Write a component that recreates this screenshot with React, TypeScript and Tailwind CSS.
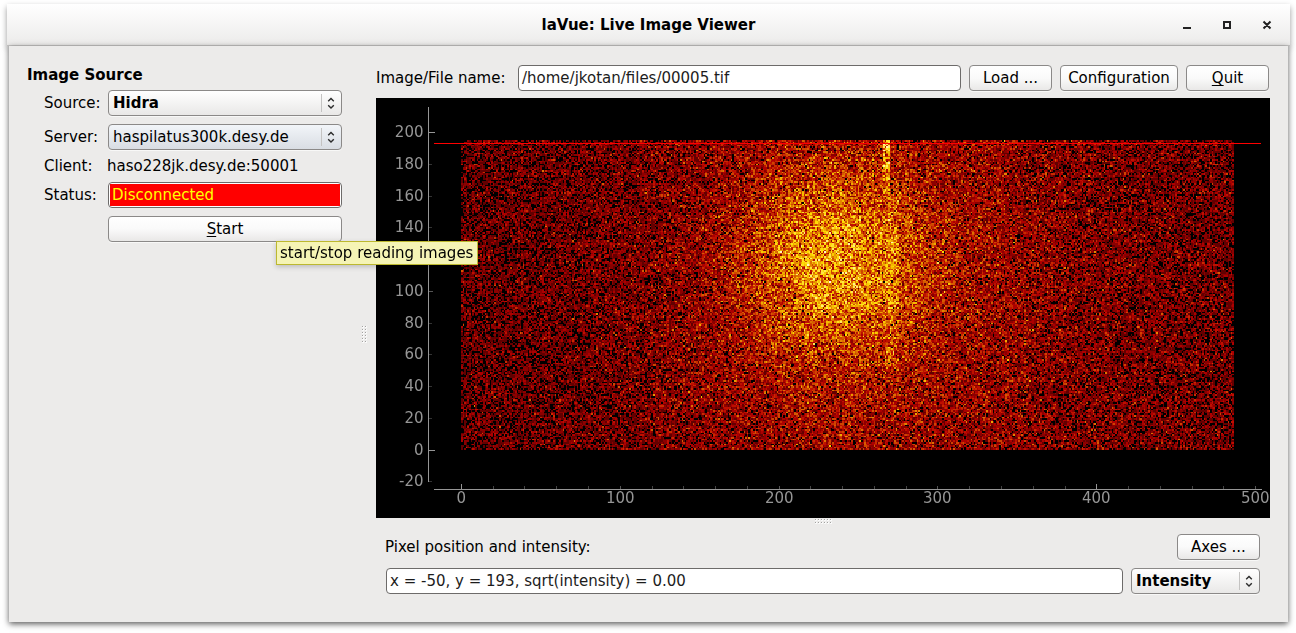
import { useLayoutEffect, useRef } from 'react';
import type { ReactNode } from 'react';

const COLS = 487;
const ROWS = 195;

function random(seed: number) {
  let s = seed;
  return () => {
    s = (s + 0x6d2b79f5) | 0;
    let t = Math.imul(s ^ (s >>> 15), 1 | s);
    t = (t + Math.imul(t ^ (t >>> 7), 61 | t)) ^ t;
    return ((t ^ (t >>> 14)) >>> 0) / 4294967296;
  };
}

function poisson(mean: number, rnd: () => number) {
  const limit = Math.exp(-mean);
  let n = 0;
  let p = rnd();
  while (p > limit) {
    n += 1;
    p *= rnd();
  }
  return n;
}

function heat(v: number): [number, number, number] {
  if (v < 1 / 3) return [185 * v * 3, 0, 0];
  if (v < 2 / 3) {
    const t = (v - 1 / 3) * 3;
    return [185 + 70 * t, 220 * t, 0];
  }
  const t = Math.min(1, (v - 2 / 3) * 3);
  return [255, 220 + 35 * t, 255 * t];
}

function expectedCount(x: number, y: number) {
  const dx = (x - 232) / (x < 232 ? 32 : 38);
  const dy = (y - 77) / 35;
  const core = 7 * Math.exp(-0.5 * (dx * dx + dy * dy));
  const hx = (x - 245) / 80;
  const hy = (y - 85) / 120;
  const halo = 2.4 * Math.exp(-0.5 * (hx * hx + hy * hy));
  let streak = 0;
  if (Math.abs(x - 267.5) < 1.6 && y < 34) streak = 9 - y * 0.2;
  else if (Math.abs(x - 271) < 5 && y > 34 && y < 142) streak = 1.6;
  const base = x > 320 ? 1.5 : 1.2;
  return base + core + halo + streak;
}

function DetectorImage() {
  const ref = useRef<HTMLCanvasElement>(null);
  useLayoutEffect(() => {
    const ctx = ref.current?.getContext('2d');
    if (!ctx) return;
    const rnd = random(50001);
    const image = ctx.createImageData(COLS, ROWS);
    for (let y = 0; y < ROWS; y++) {
      for (let x = 0; x < COLS; x++) {
        const gain = 0.3 + 1.4 * rnd();
        const n = poisson(expectedCount(x, y) * gain, rnd);
        const [r, g, b] = heat(Math.sqrt(n) / 5.6);
        const i = (y * COLS + x) * 4;
        image.data[i] = r;
        image.data[i + 1] = g;
        image.data[i + 2] = b;
        image.data[i + 3] = 255;
      }
    }
    ctx.putImageData(image, 0, 0);
  }, []);
  return (
    <canvas
      ref={ref}
      width={COLS}
      height={ROWS}
      className="absolute left-[85px] top-[42px] h-[310px] w-[773px] [image-rendering:pixelated]"
    />
  );
}

const yTicks = [200, 180, 160, 140, 120, 100, 80, 60, 40, 20, 0, -20];
const xTicks = Array.from({ length: 26 }, (_, i) => i * 20);

function Plot() {
  return (
    <div className="relative h-[420px] w-[894px] shrink-0 overflow-hidden bg-black">
      <DetectorImage />
      <svg
        className="absolute inset-0"
        width="894"
        height="420"
        fill="#969696"
        fontFamily="'DejaVu Sans', sans-serif"
        fontSize="15"
        shapeRendering="crispEdges"
      >
        <rect x="58" y="45" width="827" height="1" fill="#ff0000" />
        <rect x="52" y="9" width="1" height="375" />
        <rect x="58" y="391" width="828" height="1" />
        {yTicks.map((v) => {
          const y = Math.round(351.7 - v * 1.5885);
          const major = v % 200 === 0;
          const mid = v === 100;
          return (
            <g key={v}>
              <rect x="53" y={y} width={major ? 6 : mid ? 4 : 3} height="1" fill={major ? '#969696' : mid ? '#555' : '#333'} />
              <text x="47.5" y={y + 5} textAnchor="end">{v}</text>
            </g>
          );
        })}
        {xTicks.map((v) => {
          const x = Math.floor(85.4 + v * 1.5885);
          const major = v % 400 === 0;
          const mid = v % 100 === 0;
          return (
            <g key={v}>
              <rect x={x} y={major ? 386 : 388} width="1" height={major ? 5 : 3} fill={major ? '#969696' : mid ? '#555' : '#444'} />
              {mid && <text x={x + 0.3} y="405" textAnchor="middle">{v}</text>}
            </g>
          );
        })}
      </svg>
    </div>
  );
}

function Grip({ cols, rows, className }: { cols: number; rows: number; className: string }) {
  const dots = Array.from({ length: cols * rows }, (_, i) => [(i % cols) * 3, Math.floor(i / cols) * 3]);
  return (
    <svg className={className} width={cols * 3} height={rows * 3} shapeRendering="crispEdges">
      {dots.map(([x, y]) => (
        <g key={`${x}-${y}`}>
          <rect x={x} y={y} width="2" height="2" fill="#fafafa" />
          <rect x={x} y={y} width="1" height="1" fill="#a3a2a1" />
        </g>
      ))}
    </svg>
  );
}

function Button({ className, children }: { className: string; children: ReactNode }) {
  return (
    <button
      className={`flex h-[26px] shrink-0 items-center justify-center rounded-[4px] border border-[#8b8988] bg-linear-to-b from-white via-[#fafafa] to-[#e9e8e7] pb-px shadow-[0_1px_0_#f8f8f7] ${className}`}
    >
      {children}
    </button>
  );
}

function Combo({ className, children }: { className: string; children: ReactNode }) {
  return (
    <div
      className={`flex h-[26px] shrink-0 items-center rounded-[4px] border border-[#8b8988] pl-1 shadow-[0_1px_0_#f8f8f7] ${className}`}
    >
      <span className="grow pb-px">{children}</span>
      <span className="h-[18px] w-px bg-[#c4c3c2]" />
      <svg width="19" height="24" viewBox="0 0 19 24" fill="none" stroke="#2b2b2b" strokeWidth="1.4">
        <path d="M6.2 10.3 9 7.500l2.8 2.8M6.2 14.2l2.8 2.8 2.8-2.8" />
      </svg>
    </div>
  );
}

function Field({ className, children }: { className: string; children: ReactNode }) {
  return (
    <div className={`flex h-[26px] shrink-0 items-center rounded-[4px] border border-[#6d6b6a] bg-white pb-px pl-[3px] text-[#1c1c1c] ${className}`}>
      {children}
    </div>
  );
}

function SourcePanel() {
  return (
    <section className="flex w-[333px] shrink-0 flex-col pl-[18px] pt-5">
      <h2 className="h-[18px] font-bold leading-[18px]">Image Source</h2>
      <div className="mt-[6px] flex items-center pl-[17px]">
        <span className="w-16 pb-px">Source:</span>
        <Combo className="w-[234px] bg-linear-to-b from-white to-[#e9e8e7] font-bold">Hidra</Combo>
      </div>
      <div className="mt-2 flex items-center pl-[17px]">
        <span className="w-16 pb-px">Server:</span>
        <Combo className="w-[234px] bg-linear-to-b from-[#f2f5f9] to-[#d9dde3]">haspilatus300k.desy.de</Combo>
      </div>
      <div className="mt-[6px] flex h-[19px] items-center pl-[17px]">
        <span className="w-[63px]">Client:</span>
        <span>haso228jk.desy.de:50001</span>
      </div>
      <div className="mt-[7px] flex items-center pl-[17px]">
        <span className="w-16 pb-px">Status:</span>
        <div className="flex h-[26px] w-[234px] rounded-[4px] border border-[#6d6b6a] bg-white p-px">
          <span className="flex grow items-center bg-[#ff0000] pb-px pl-[2px] text-[#ffff00]">Disconnected</span>
        </div>
      </div>
      <Button className="ml-[81px] mt-2 w-[234px]">
        <span><span className="underline underline-offset-2">S</span>tart</span>
      </Button>
    </section>
  );
}

export default function App() {
  return (
    <div className="relative h-[633px] w-[1296px] overflow-hidden bg-white pl-[7px] pt-1 font-['DejaVu_Sans',sans-serif] text-[15px] leading-[18px] whitespace-nowrap text-black">
      <div className="relative flex h-[42px] w-[1283px] border-b border-[#c8c7c6] bg-linear-to-b from-white to-[#ecebea] shadow-[0_3px_6px_rgba(0,0,0,0.4)]">
        <h1 className="w-full text-center font-bold leading-[42px]">laVue: Live Image Viewer</h1>
        <svg className="absolute right-1 top-0" width="120" height="41" fill="none" stroke="#222" strokeWidth="2">
          <path d="M17 24h8M58 18h6v6h-6zM97.5 17.5l7 7M104.500 17.500l-7 7" />
        </svg>
      </div>
      <main className="relative ml-[2px] flex h-[576px] w-[1279px] bg-[#ecebea] shadow-[0_2px_6px_rgba(0,0,0,0.65)]">
        <SourcePanel />
        <div className="flex w-[34px] shrink-0 items-center pl-5 pt-0.5">
          <Grip cols={2} rows={6} className="block" />
        </div>
        <section className="flex w-[894px] flex-col pt-[19px]">
          <div className="flex items-center">
            <span className="w-[142px] pb-px">Image/File name:</span>
            <Field className="w-[443px]">/home/jkotan/files/00005.tif</Field>
            <Button className="ml-2 w-[83px]">Load ...</Button>
            <Button className="ml-2 w-[118px]">Configuration</Button>
            <Button className="ml-2 w-[83px]">
              <span><span className="underline underline-offset-2">Q</span>uit</span>
            </Button>
          </div>
          <div className="mt-[7px]">
            <Plot />
          </div>
          <div className="flex h-[6px] items-start justify-center pl-0.5 pt-px">
            <Grip cols={6} rows={2} className="block shrink-0" />
          </div>
          <div className="mt-[10px] flex items-center justify-between pl-[9px] pr-[10px]">
            <span className="pb-px">Pixel position and intensity:</span>
            <Button className="w-[83px]">Axes ...</Button>
          </div>
          <div className="mt-2 flex items-center gap-2 pl-[10px]">
            <Field className="w-[737px]">x = -50, y = 193, sqrt(intensity) = 0.00</Field>
            <Combo className="w-[129px] bg-linear-to-b from-white to-[#e9e8e7] font-bold">Intensity</Combo>
          </div>
        </section>
      </main>
      <div className="absolute left-[276px] top-[241px] flex h-6 w-[202px] items-center border border-[#bcb82f] bg-[#f5f4b5] pl-[3px] shadow-[0_2px_5px_rgba(0,0,0,0.2)]">
        start/stop reading images
      </div>
    </div>
  );
}
